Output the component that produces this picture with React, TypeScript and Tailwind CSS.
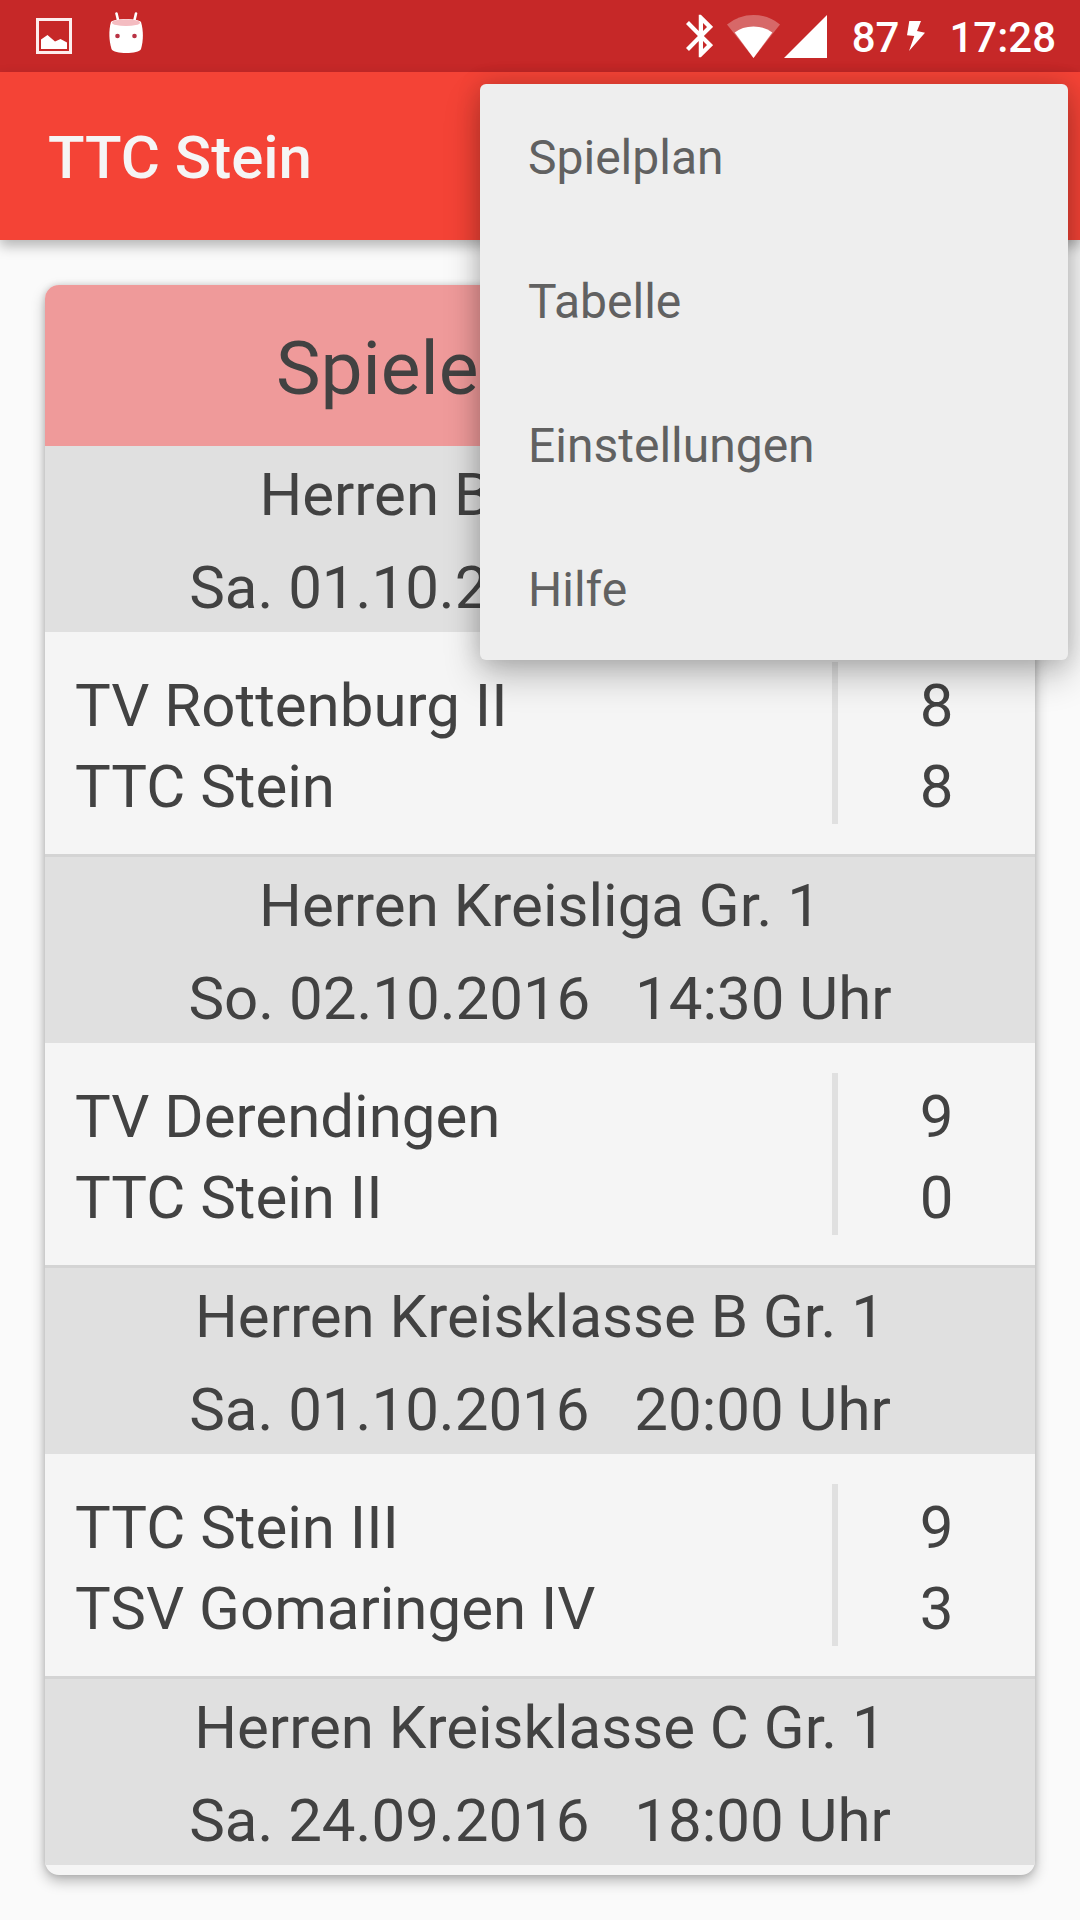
const menuItems = ['Spielplan', 'Tabelle', 'Einstellungen', 'Hilfe']

const matches = [
  {
    league: 'Herren Bezirksklasse',
    date: 'Sa. 01.10.2016',
    time: '18:00 Uhr',
    teams: [
      { name: 'TV Rottenburg II', score: 8 },
      { name: 'TTC Stein', score: 8 },
    ],
  },
  {
    league: 'Herren Kreisliga Gr. 1',
    date: 'So. 02.10.2016',
    time: '14:30 Uhr',
    teams: [
      { name: 'TV Derendingen', score: 9 },
      { name: 'TTC Stein II', score: 0 },
    ],
  },
  {
    league: 'Herren Kreisklasse B Gr. 1',
    date: 'Sa. 01.10.2016',
    time: '20:00 Uhr',
    teams: [
      { name: 'TTC Stein III', score: 9 },
      { name: 'TSV Gomaringen IV', score: 3 },
    ],
  },
  {
    league: 'Herren Kreisklasse C Gr. 1',
    date: 'Sa. 24.09.2016',
    time: '18:00 Uhr',
    teams: [],
  },
]

function StatusBar() {
  return (
    <div className="flex h-[72px] items-center justify-between bg-[#c62828] pr-6 pl-9 text-white">
      <div className="flex items-center gap-9">
        <svg width="36" height="36" viewBox="0 0 36 36" aria-hidden="true">
          <rect x="1.5" y="1.5" width="33" height="33" fill="none" stroke="#fdeeee" strokeWidth="3" />
          <path d="M5 21.5L11.5 17L19 23.5L24.5 21L31 24.5V31H5Z" fill="currentColor" />
        </svg>
        {/* marshmallow head */}
        <svg width="36" height="48" viewBox="0 0 36 48" aria-hidden="true">
          <path d="M8.5 1.5L10.5 10M28 1.5L26 10" stroke="currentColor" strokeWidth="2.6" strokeLinecap="round" />
          <path
            d="M3 10C6 6 30 6 33 10C35.5 18 35.5 29 33 37C31 42.300 5.500 42.300 3.500 37C1 29 .5 18 3 10Z"
            fill="currentColor"
          />
          <ellipse cx="18" cy="10.7" rx="14" ry="3.400" fill="#f4bcc1" />
          <circle cx="9.500" cy="24" r="2.300" fill="#b93244" />
          <circle cx="26.500" cy="24" r="2.300" fill="#b93244" />
        </svg>
      </div>
      <div className="flex items-center">
        <svg width="27" height="44" viewBox="5 2 12.7 20" className="mr-3.5" aria-hidden="true">
          <path
            d="M17.71 7.71L12 2h-1v7.59L6.41 5 5 6.41 10.59 12 5 17.59 6.41 19 11 14.41V22h1l5.71-5.71-4.3-4.29 4.3-4.29zM13 5.83l1.88 1.88L13 9.59V5.83zm1.88 10.46L13 18.17v-3.76l1.88 1.88z"
            fill="currentColor"
          />
        </svg>
        <svg width="53" height="43" viewBox="0 0 53 43" className="mr-1" aria-hidden="true">
          <path d="M26.5 43L0 9.5Q11.500 0 26.5 0T53 9.5Z" fill="currentColor" opacity="0.3" />
          <path d="M26.5 43L7.7 17.5Q15 11.5 26.5 11.5T45.3 17.5Z" fill="currentColor" />
        </svg>
        <svg width="43" height="43" viewBox="0 0 43 43" className="mr-[25px]" aria-hidden="true">
          <path d="M0 43H43V0Z" fill="currentColor" />
        </svg>
        <span className="pt-1 text-[42px] leading-[50px] font-medium">87</span>
        <svg width="18" height="30" viewBox="0 0 18 30" className="mr-6 ml-2" aria-hidden="true">
          <path d="M2.3 0H14L10 10L18 11.7L2 30L7.3 15L0 14.3Z" fill="currentColor" />
        </svg>
        <span className="pt-1 text-[42px] leading-[50px] font-medium">17:28</span>
      </div>
    </div>
  )
}

function OverflowMenu() {
  return (
    <div
      role="menu"
      className="absolute top-[84px] right-3 z-20 flex w-[588px] flex-col rounded-md bg-[#eeeeee] shadow-[0_16px_36px_rgba(0,0,0,0.24),0_0_24px_rgba(0,0,0,0.16)]"
    >
      {menuItems.map((item) => (
        <button
          key={item}
          type="button"
          role="menuitem"
          className="h-36 px-12 pt-1 text-left text-5xl text-[#616161]"
        >
          {item}
        </button>
      ))}
    </div>
  )
}

export default function App() {
  return (
    <div className="relative flex min-h-screen flex-col overflow-hidden bg-[#fafafa] font-['Roboto',sans-serif] text-[#424242]">
      <StatusBar />
      <header className="flex h-[168px] items-center bg-[#f44336] px-12 pt-1 shadow-[0_6px_12px_rgba(0,0,0,0.28)]">
        <h1 className="text-6xl font-medium text-[#f5f5f5]">TTC Stein</h1>
      </header>
      <OverflowMenu />

      <main className="p-[45px]">
        <div className="overflow-hidden rounded-[14px] bg-[#f5f5f5] pb-2.5 shadow-[0_6px_14px_rgba(0,0,0,0.28),0_0_6px_rgba(0,0,0,0.14)]">
          <h2 className="bg-[#ef9a9a] pt-1.5 text-center text-[75px] leading-[155px]">Spielergebnisse</h2>
          {matches.map((match, index) => (
            <section key={match.league}>
              <div
                className={`flex flex-col gap-[13px] bg-[#e0e0e0] pt-[9px] pb-1 text-center text-6xl leading-20 ${
                  index > 0 ? 'border-t-3 border-[#d4d4d4]' : ''
                }`}
              >
                <h3>{match.league}</h3>
                <p>
                  {match.date}&nbsp;&nbsp; {match.time}
                </p>
              </div>
              {match.teams.length > 0 && (
                <div className="py-[30px]">
                  <table className="w-full border-separate border-spacing-0 text-6xl leading-[75px]">
                    <tbody>
                      {match.teams.map((team) => (
                        <tr key={team.name}>
                          <th scope="row" className="p-0 pt-1.5 pl-[30px] text-left font-normal">
                            {team.name}
                          </th>
                          <td className="w-[203px] border-l-6 border-[#e0e0e0] p-0 pt-1.5 text-center">
                            {team.score}
                          </td>
                        </tr>
                      ))}
                    </tbody>
                  </table>
                </div>
              )}
            </section>
          ))}
        </div>
      </main>
    </div>
  )
}
